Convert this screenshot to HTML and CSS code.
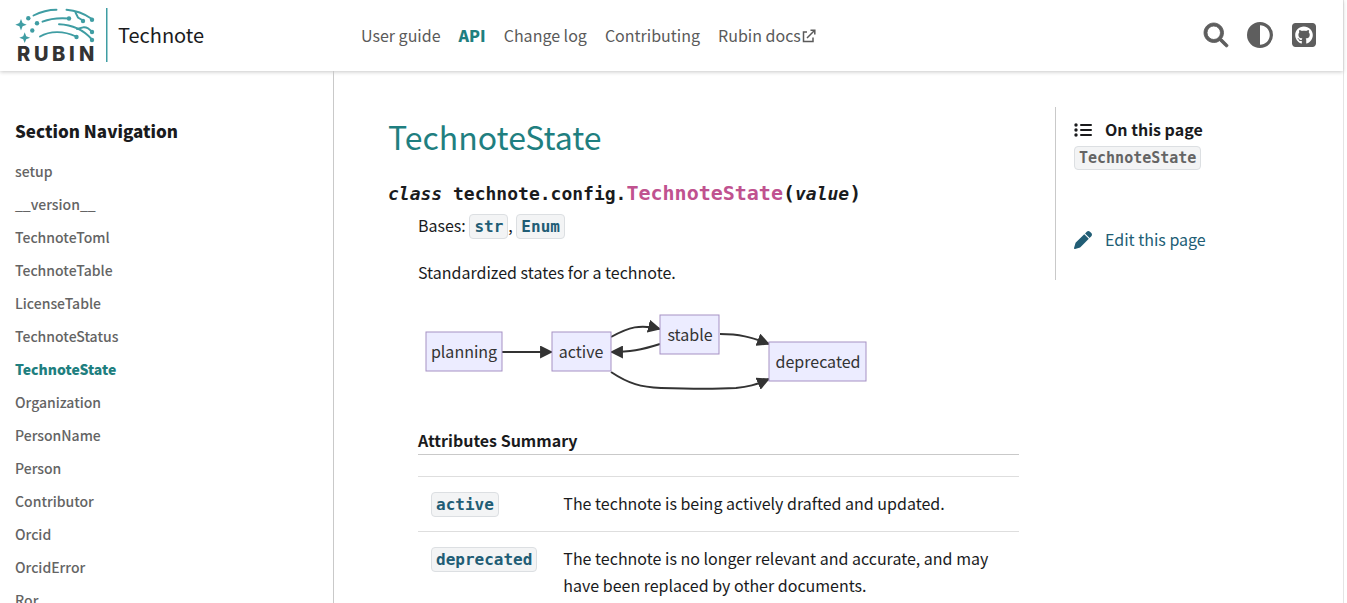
FILE: index.html
```html
<!DOCTYPE html>
<html lang="en">
<head>
<meta charset="utf-8">
<title>TechnoteState — Technote</title>
<link rel="stylesheet" href="styles.css">
</head>
<body>
<div class="page">
  <header class="header">
    <a class="brand" href="#">
      <svg class="brand-logo" width="94" height="58" viewBox="15 7 94 58" role="img" aria-label="Rubin">
        <g fill="none" stroke="#3f9da3" stroke-width="1.9" stroke-linecap="round">
          <path d="M33.500 15.500C41 11.700 48 9.800 56.500 9.800"/>
          <path d="M42.500 21.700C51 18.200 59 17.700 69 18.500"/>
          <path d="M40 36.500C50 30.500 64 30.800 76 36.500"/>
          <path d="M66.500 9.800C76 10.500 84 13.500 92 19"/>
          <path d="M75.500 12.500L78 17.500L83 20.500"/>
          <path d="M59 24.300C72 24.700 84 30.500 92 39.500"/>
          <path d="M77 29L84 27.200C88 27.200 90 29.500 92 32"/>
        </g>
        <g fill="#3f9da3">
          <circle cx="28.300" cy="18.300" r="2.200"/><circle cx="37" cy="23.200" r="2.200"/><circle cx="32.300" cy="30.500" r="2.200"/>
          <circle cx="69" cy="18.500" r="2.200"/><circle cx="76.500" cy="37" r="2.200"/><circle cx="83" cy="21" r="2.200"/>
          <circle cx="92" cy="19.700" r="2.200"/><circle cx="92" cy="32" r="2.200"/><circle cx="92" cy="40" r="2.200"/>
          <path d="M21 19L22.600 23.100L26.700 24.700L22.600 26.300L21 30.400L19.400 26.300L15.300 24.700L19.400 23.100Z"/>
          <path d="M24.700 32.300L26.200 36.200L30.100 37.700L26.200 39.200L24.700 43.100L23.200 39.200L19.300 37.700L23.200 36.200Z"/>
          <rect x="106" y="8" width="1.500" height="54"/>
        </g>
        <text class="logo-word" x="17 34 52 69 79" y="61">RUBIN</text>
      </svg>
      <span class="brand-name">Technote</span>
    </a>
    <nav class="nav" aria-label="Site">
      <a href="#">User guide</a>
      <a class="current" href="#">API</a>
      <a href="#">Change log</a>
      <a href="#">Contributing</a>
      <a class="external" href="#">Rubin docs<svg width="14" height="14" viewBox="0 0 14 14" fill="none" stroke="currentColor" stroke-width="1.500"><path d="M5 3H1.500V12.500H11V8.500M5 9L12.500 1.500M8.500 1.200H12.800V5.500"/></svg></a>
    </nav>
    <div class="tools">
      <button type="button" aria-label="Search"><svg class="search-icon" width="24" height="24" viewBox="0 0 512 512"><path d="M416 208c0 45.900-14.900 88.300-40 122.700L502.600 457.400c12.500 12.500 12.500 32.800 0 45.300s-32.800 12.500-45.300 0L330.700 376c-34.400 25.200-76.800 40-122.700 40C93.100 416 0 322.900 0 208S93.100 0 208 0S416 93.100 416 208zM208 352a144 144 0 1 0 0-288 144 144 0 1 0 0 288z"/></svg></button>
      <button type="button" aria-label="Colour mode"><svg width="26" height="26" viewBox="0 0 512 512"><path d="M448 256c0-106-86-192-192-192V448c106 0 192-86 192-192zM0 256a256 256 0 1 1 512 0A256 256 0 1 1 0 256z"/></svg></button>
      <a href="#" aria-label="GitHub"><svg width="24" height="24" viewBox="0 32 448 448"><path d="M448 96c0-35.300-28.700-64-64-64H64C28.700 32 0 60.700 0 96V416c0 35.300 28.700 64 64 64H384c35.300 0 64-28.700 64-64V96zM265.800 407.700c0-1.800 0-6 .1-11.600c.1-11.400 .1-28.800 .1-43.700c0-15.600-5.200-25.500-11.300-30.700c37-4.100 76-9.200 76-73.100c0-18.200-6.500-27.300-17.100-39c1.700-4.300 7.400-22-1.700-45c-13.900-4.300-45.700 17.900-45.700 17.900c-13.200-3.700-27.500-5.600-41.600-5.600s-28.400 1.900-41.600 5.600c0 0-31.800-22.200-45.700-17.900c-9.100 22.900-3.500 40.600-1.700 45c-10.600 11.700-15.600 20.800-15.600 39c0 63.600 37.300 69 74.300 73.100c-4.800 4.300-9.100 11.700-10.600 22.300c-9.500 4.300-33.800 11.700-48.300-13.900c-9.100-15.800-25.500-17.100-25.500-17.100c-16.200-.2-1.100 10.200-1.100 10.200c10.800 5 18.400 24.200 18.400 24.200c9.700 29.700 56.100 19.700 56.100 19.700c0 9 .1 21.700 .1 30.600c0 4.800 .1 8.600 .1 10c0 4.300-3 9.500-11.500 8C106 393.600 59.800 330.800 59.800 257.400c0-91.800 70.200-161.500 162-161.500s166.200 69.700 166.200 161.500c.1 73.400-44.700 136.300-110.700 158.300c-8.400 1.500-11.500-3.700-11.500-8z"/></svg></a>
    </div>
  </header>
  <div class="columns">
    <nav class="sidebar" aria-labelledby="section-nav">
      <h2 class="sidebar-title" id="section-nav">Section Navigation</h2>
      <ul class="sidebar-list">
        <li><a href="#">setup</a></li>
        <li><a href="#">__version__</a></li>
        <li><a href="#">TechnoteToml</a></li>
        <li><a href="#">TechnoteTable</a></li>
        <li><a href="#">LicenseTable</a></li>
        <li><a href="#">TechnoteStatus</a></li>
        <li><a class="current" href="#">TechnoteState</a></li>
        <li><a href="#">Organization</a></li>
        <li><a href="#">PersonName</a></li>
        <li><a href="#">Person</a></li>
        <li><a href="#">Contributor</a></li>
        <li><a href="#">Orcid</a></li>
        <li><a href="#">OrcidError</a></li>
        <li><a href="#">Ror</a></li>
      </ul>
    </nav>
    <main class="article">
      <h1 class="title">TechnoteState</h1>
      <div class="signature"><em>class</em> technote.config.<span class="sig-name">TechnoteState</span><span class="paren">(</span><em>value</em><span class="paren">)</span></div>
      <div class="description">
        <p class="bases">Bases: <a class="code" href="#">str</a>, <a class="code" href="#">Enum</a></p>
        <p class="summary">Standardized states for a technote.</p>
        <svg class="diagram" width="460" height="90" viewBox="418 308 460 90" role="img" aria-label="State diagram">
          <defs>
            <marker id="arrow" viewBox="0 0 12 12" refX="11" refY="6" markerWidth="13" markerHeight="13" markerUnits="userSpaceOnUse" orient="auto"><path d="M0 0L12 6L0 12Z" fill="#333"/></marker>
          </defs>
          <g class="edges">
            <path d="M502 352H552" marker-end="url(#arrow)"/>
            <path d="M611 337C629 327 640 324 660 329" marker-end="url(#arrow)"/>
            <path d="M660 344C641 350 630 352 611 352" marker-end="url(#arrow)"/>
            <path d="M720 334C739 334 751 337 769 344" marker-end="url(#arrow)"/>
            <path d="M611 372C629 384 641 387 661 388C690 389 719 389 736 388C748 387 755 385 769 379" marker-end="url(#arrow)"/>
          </g>
          <g class="nodes">
            <rect x="426" y="332" width="76" height="39"/><rect x="552" y="332" width="59" height="39"/>
            <rect x="660" y="315" width="59" height="39"/><rect x="769" y="342" width="97" height="39"/>
          </g>
          <g class="node-labels">
            <text x="464" y="358">planning</text><text x="581" y="358">active</text>
            <text x="690" y="341">stable</text><text x="818" y="368">deprecated</text>
          </g>
        </svg>
        <h2 class="rubric">Attributes Summary</h2>
        <table class="attributes">
          <tbody>
            <tr><td><a class="code" href="#">active</a></td><td>The technote is being actively drafted and updated.</td></tr>
            <tr><td><a class="code" href="#">deprecated</a></td><td>The technote is no longer relevant and accurate, and may have been replaced by other documents.</td></tr>
          </tbody>
        </table>
      </div>
    </main>
    <aside class="toc-column">
      <div class="toc">
        <h2 class="toc-title"><svg width="18" height="14" viewBox="0 0 18 14"><g fill="currentColor"><circle cx="2" cy="2" r="1.700"/><circle cx="2" cy="7" r="1.700"/><circle cx="2" cy="12" r="1.700"/><rect x="6" y="1" width="12" height="2" rx="1"/><rect x="6" y="6" width="12" height="2" rx="1"/><rect x="6" y="11" width="12" height="2" rx="1"/></g></svg>On this page</h2>
        <a class="code toc-code" href="#">TechnoteState</a>
        <a class="edit" href="#"><svg width="18" height="18" viewBox="0 0 512 512" fill="currentColor"><path d="M362.700 19.300L314.300 67.700 444.300 197.700l48.400-48.400c25-25 25-65.500 0-90.500L453.300 19.300c-25-25-65.500-25-90.500 0zm-71 71L58.600 323.500c-10.400 10.400-18 23.300-22.200 37.400L1 481.200C-1.500 489.700 .8 498.800 7 505s15.300 8.500 23.700 6.100l120.300-35.400c14.100-4.200 27-11.800 37.400-22.200L421.700 220.300 291.700 90.300z"/></svg>Edit this page</a>
      </div>
    </aside>
  </div>
</div>
</body>
</html>
```
FILE: styles.css
```css
* { box-sizing: border-box; }

body {
  margin: 0;
  height: 100vh;
  overflow: hidden;
  background: #fff;
  color: #1a1b1d;
  font: 16px/27px "Noto Sans CJK SC", "Noto Sans", sans-serif;
}

a { color: inherit; text-decoration: none; }
h1, h2, p, ul { margin: 0; padding: 0; }
button { padding: 0; border: 0; background: none; color: inherit; cursor: pointer; }
svg { display: block; flex: none; }

.page {
  height: 100%;
  margin-right: 3px;
  border-right: 1px solid #e4e4e4;
  display: flex;
  flex-direction: column;
}

.header {
  display: flex;
  align-items: center;
  height: 71px;
  flex: none;
  padding-right: 27px;
  box-shadow: 0 1px 4px #c8c8c8;
  color: #5a5a5a;
}
.brand {
  display: flex;
  align-items: center;
  gap: 9px;
  width: 334px;
  padding-left: 15px;
}
.brand-logo { overflow: visible; }
.logo-word { font: 800 20px Inter, sans-serif; fill: #333; }
.brand-name { font-size: 20px; line-height: 28px; padding-bottom: 2px; color: #1a1b1d; }
.nav { display: flex; gap: 18px; padding-left: 27px; }
.nav .current { color: #1f7f80; font-weight: 900; }
.external { display: flex; align-items: center; gap: 1px; }
.tools { display: flex; align-items: center; gap: 19px; margin-left: auto; padding-bottom: 1px; }
.tools svg { fill: #5e5e5e; }
.tools .search-icon { stroke: #5e5e5e; stroke-width: 18; overflow: visible; }

.columns { display: flex; flex: 1; min-height: 0; }

.sidebar {
  width: 334px;
  flex: none;
  padding: 46px 15px 0;
  border-right: 1px solid #c9c9c9;
  overflow: hidden;
}
.sidebar-title { font-size: 17px; line-height: 27px; font-weight: 900; }
.sidebar-list {
  list-style: none;
  margin-top: 11px;
  color: #646464;
  font-size: 14px;
  font-weight: 500;
}
.sidebar-list li { padding: 3px 0; }
.sidebar-list .current { color: #1f7f80; font-weight: 900; }

.article { flex: 1; min-width: 0; padding: 42px 36px 0 54px; }
.title { font-size: 32px; line-height: 46px; font-weight: 400; color: #1f7f80; }
.signature {
  margin-top: 20px;
  font: 700 18px/28px "DejaVu Sans Mono", monospace;
}
.sig-name, .paren { font-size: 20px; }
.sig-name { color: #c0528f; }
.description { padding-left: 30px; }
.bases { margin-top: 4px; }
.summary { margin-top: 20px; }
.code {
  display: inline-block;
  padding: 0 4px;
  border: 1px solid #dcdfe2;
  border-radius: 4px;
  background: #f3f4f5;
  color: #215d75;
  font: 700 16px/23px "DejaVu Sans Mono", monospace;
}

.diagram { margin-top: 22px; }
.edges { fill: none; stroke: #333; stroke-width: 2; }
.nodes { fill: #ececff; stroke: #a691c4; }
.node-labels { fill: #333; text-anchor: middle; font-size: 16px; }

.rubric {
  margin-top: 29px;
  font-size: 16px;
  font-weight: 700;
  border-bottom: 1px solid #c9c9c9;
}
.attributes { width: 100%; margin-top: 21px; border-collapse: collapse; }
.attributes td { padding: 13px 13px 14px; border-top: 1px solid #dedede; vertical-align: top; }

.toc-column { width: 288px; flex: none; padding-top: 36px; }
.toc { padding: 9px 18px 27px; border-left: 1px solid #c9c9c9; }
.toc-title { display: flex; align-items: center; gap: 13px; font-size: 16px; font-weight: 700; }
.toc-code { margin-top: 2px; color: #646464; font-size: 15px; line-height: 22px; }
.edit { display: flex; align-items: center; gap: 13px; margin-top: 56px; color: #215d75; }
```
